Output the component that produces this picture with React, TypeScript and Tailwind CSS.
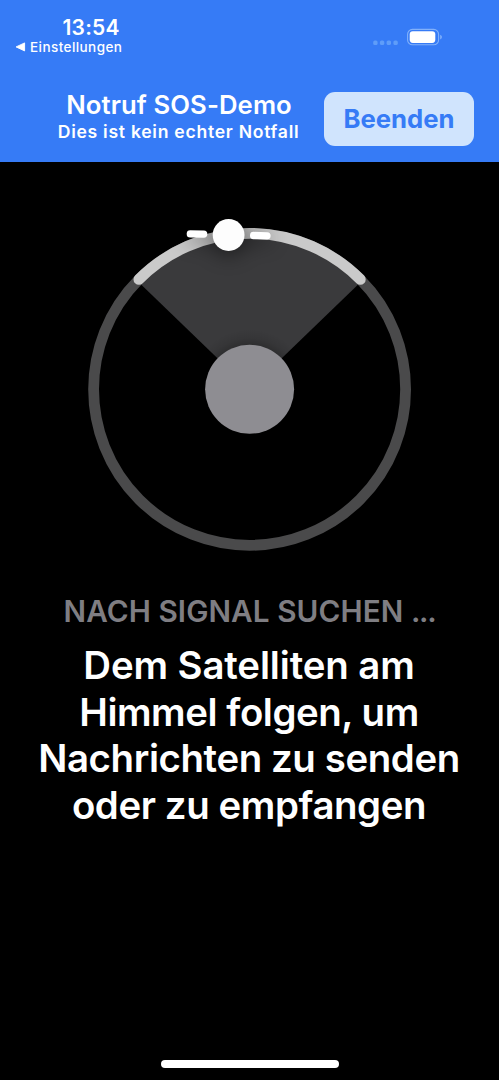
import React from 'react';

function StatusBar() {
  return (
    <div className="flex h-[62px] items-start justify-between">
      <div className="pt-[17px]">
        <div className="h-[22px] pl-[62.5px] text-[21px] leading-[22px] font-semibold tracking-[0.2px]">13:54</div>
        <div className="flex h-4 items-center pl-[15px]">
          <svg width="11" height="10" viewBox="0 0 11 10" className="mr-[4px]">
            <path d="M1.1 4.9 9.6 0.9V8.9Z" fill="white" stroke="white" strokeWidth="0.9" strokeLinejoin="round" />
          </svg>
          <span className="text-[13.5px] leading-4 font-medium tracking-[0.43px]">Einstellungen</span>
        </div>
      </div>
      <svg width="72" height="24" viewBox="370 25 72 24" className="mt-[25px] mr-[57px]">
        <g fill="#5f9df9">
          <rect x="373.2" y="40.4" width="4.4" height="4.6" rx="1.6" />
          <rect x="379.9" y="40.4" width="4.4" height="4.6" rx="1.6" />
          <rect x="386.6" y="40.4" width="4.4" height="4.6" rx="1.6" />
          <rect x="393.4" y="40.4" width="4.4" height="4.6" rx="1.6" />
        </g>
        <rect x="407.6" y="29.4" width="31" height="15.4" rx="4.8" fill="none" stroke="#82b1fa" strokeWidth="1.1" />
        <rect x="409.7" y="31.3" width="25.6" height="11.6" rx="3.1" fill="white" />
        <path d="M440.2 34.7c1 .4 1.7 1.3 1.7 2.4s-.7 2-1.7 2.4z" fill="#82b1fa" />
      </svg>
    </div>
  );
}

function Header() {
  return (
    <header className="h-[162px] bg-[#367bf6] text-white">
      <StatusBar />
      <div className="flex items-start pl-[57px]">
        <div className="w-[244px] pt-[29px] text-center whitespace-nowrap">
          <h1 className="h-[27px] text-[25.7px] leading-7 font-semibold tracking-[0.1px]">Notruf SOS-Demo</h1>
          <p className="h-[28px] pr-[1px] text-[17.6px] leading-[27px] font-semibold tracking-[0.72px]">Dies ist kein echter Notfall</p>
        </div>
        <button className="mt-[30px] ml-[23px] h-[54px] w-[150px] rounded-[11px] bg-[#d0e4fd] text-[25.7px] leading-[54px] font-bold text-[#367bf6]">
          Beenden
        </button>
      </div>
    </header>
  );
}

function SatelliteDial() {
  return (
    <svg width="499" height="400" viewBox="0 162 499 400" className="block">
      <defs>
        <filter id="shadow" x="-200%" y="-200%" width="500%" height="500%">
          <feGaussianBlur stdDeviation="10" />
        </filter>
        <radialGradient id="hub" gradientUnits="userSpaceOnUse" cx="249.6" cy="389.3" r="60">
          <stop offset="0.73" stopColor="black" stopOpacity="0.22" />
          <stop offset="0.85" stopColor="black" stopOpacity="0.08" />
          <stop offset="1" stopColor="black" stopOpacity="0" />
        </radialGradient>
      </defs>
      <circle cx="249.6" cy="389.3" r="156" fill="none" stroke="#4a4a4b" strokeWidth="10.8" />
      <path d="M249.6 389.3 139.5 283A153 153 0 0 1 359.7 283Z" fill="#3a3a3c" />
      <circle cx="249.6" cy="389.3" r="60" fill="url(#hub)" />
      <path d="M138.9 279.4A156 156 0 0 1 360.3 279.4" fill="none" stroke="#cacaca" strokeWidth="10.8" strokeLinecap="round" />
      <g fill="black" opacity="0.5" filter="url(#shadow)">
        <circle cx="228.6" cy="238" r="17" />
        <rect x="187" y="234" width="84" height="8" rx="4" />
      </g>
      <rect x="186.7" y="230.3" width="20.6" height="7.3" rx="3.5" fill="white" transform="rotate(1.2 197 234)" />
      <rect x="250" y="232" width="20.6" height="7.3" rx="3.5" fill="white" transform="rotate(1.2 260 235.6)" />
      <circle cx="228.6" cy="235" r="15.9" fill="#fdfdfd" />
      <circle cx="249.6" cy="389.3" r="44.5" fill="#8e8d92" />
    </svg>
  );
}

export default function App() {
  return (
    <div className="flex h-[1080px] w-[499px] flex-col overflow-hidden bg-black font-['Inter',sans-serif]">
      <Header />
      <main className="flex-1">
        <SatelliteDial />
        <section className="pt-[33px] text-center whitespace-nowrap">
          <h2 className="h-[33px] text-[29.7px] leading-[33px] font-semibold tracking-[0.08px] text-[#7f7e83]">
            NACH SIGNAL SUCHEN <span className="tracking-[-1.3px]">...</span>
          </h2>
          <p className="mt-[14.2px] text-[38.4px] leading-[46.5px] font-semibold text-white">
            <span className="block pr-px tracking-[-0.12px]">Dem Satelliten am</span>
            <span className="block pr-px tracking-[-0.44px]">Himmel folgen, um</span>
            <span className="block pr-px tracking-[-0.4px]">Nachrichten zu senden</span>
            <span className="block pr-px tracking-[-0.4px]">oder zu empfangen</span>
          </p>
        </section>
      </main>
      <div className="mr-auto mb-[12.5px] ml-[160.5px] h-2 w-[178px] rounded-full bg-white" />
    </div>
  );
}
